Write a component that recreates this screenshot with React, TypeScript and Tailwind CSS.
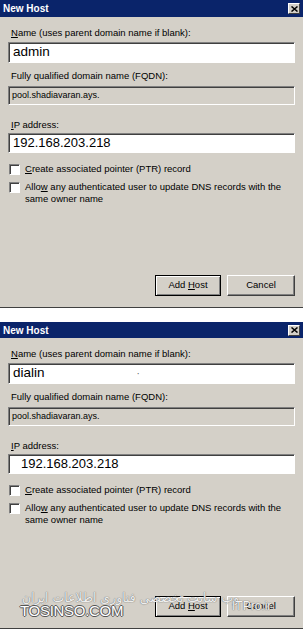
import React from 'react';

const font = { fontFamily: '"Liberation Sans", Arial, sans-serif' };

function Sunken({ children, gray, className }: { children?: React.ReactNode; gray?: boolean; className?: string }) {
  return (
    <div
      className={`flex items-center border border-t-[#808080] border-l-[#808080] border-b-white border-r-white shadow-[inset_1px_1px_0_#404040] ${gray ? 'bg-[#d4d0c8]' : 'bg-white'} ${className ?? ''}`}
    >
      {children}
    </div>
  );
}

function CheckRow({ children, className }: { children: React.ReactNode; className?: string }) {
  return (
    <div className={`flex items-start gap-[5px] pl-[1px] ${className ?? ''}`}>
      <div className="mt-[1px] h-[11px] w-[11px] shrink-0 border border-t-[#808080] border-l-[#808080] border-b-white border-r-white bg-white shadow-[inset_1px_1px_0_#404040]" />
      <div className="text-[9.5px] leading-[12px] text-black">{children}</div>
    </div>
  );
}

function Dialog({
  name,
  extra,
  ipPad,
  titleH,
  watermark,
}: {
  name: string;
  extra?: React.ReactNode;
  ipPad: string;
  titleH: string;
  watermark?: boolean;
}) {
  return (
    <div className="relative bg-[#d4d0c8] border-b border-b-[#404040]" style={font}>
      <div className={`flex ${titleH} items-center justify-between bg-[#0a246a] pl-[3px] pr-[3px]`}>
        <span className="text-[10px] font-bold text-white">New Host</span>
        <div className="flex h-[11px] w-[12px] items-center justify-center border border-t-white border-l-white border-b-[#404040] border-r-[#404040] bg-[#d4d0c8]">
          <svg width="7" height="6" viewBox="0 0 7 6">
            <path d="M0.5 0.5 L6.5 5.5 M6.5 0.5 L0.5 5.5" stroke="#000" strokeWidth="1.5" />
          </svg>
        </div>
      </div>
      <div className="px-[8px] pb-[11px]">
        <div className="ml-[3px] mt-[10px] text-[9.5px] leading-[12px] text-black">
          <span className="underline">N</span>ame (uses parent domain name if blank):
        </div>
        <Sunken className="mt-[3px] h-[21px] pl-[4px]">
          <span className="text-[13.5px] text-black">{name}</span>
          {extra}
        </Sunken>
        <div className="ml-[3px] mt-[7px] text-[9.5px] leading-[12px] text-black">Fully qualified domain name (FQDN):</div>
        <Sunken gray className="mt-[4px] h-[19px] pl-[3px]">
          <span className="text-[9px] text-black">pool.shadiavaran.ays.</span>
        </Sunken>
        <div className="ml-[3px] mt-[14px] text-[9.5px] leading-[12px] text-black">
          <span className="underline">I</span>P address:
        </div>
        <Sunken className={`mt-[2px] h-[20px] ${ipPad}`}>
          <span className="text-[13px] text-black">192.168.203.218</span>
        </Sunken>
        <CheckRow className="mt-[10px]">
          <span className="underline">C</span>reate associated pointer (PTR) record
        </CheckRow>
        <CheckRow className="mt-[6px]">
          Allo<span className="underline">w</span> any authenticated user to update DNS records with the
          <br />
          same owner name
        </CheckRow>
        <div className="mt-[70px] flex justify-end gap-[6px]">
          <button className="flex h-[21px] w-[66px] items-center justify-center border border-black bg-[#d4d0c8] text-[9.5px] text-black shadow-[inset_1px_1px_0_#fff,inset_-1px_-1px_0_#808080]">
            <span>
              Add <span className="underline">H</span>ost
            </span>
          </button>
          <button className="flex h-[21px] w-[68px] items-center justify-center border border-t-white border-l-white border-b-[#404040] border-r-[#404040] bg-[#d4d0c8] text-[9.5px] text-black shadow-[inset_-1px_-1px_0_#808080]">
            Cancel
          </button>
        </div>
      </div>
      {watermark && (
        <>
          <div
            dir="rtl"
            className="absolute left-[22px] top-[267px] text-[12.5px] text-[#eeeeee] [text-shadow:0_0_1px_#777,0_0_1px_#777]"
            style={{ fontFamily: '"DejaVu Sans", sans-serif' }}
          >
            وب سایت تخصصی فناوری اطلاعات ایران
          </div>
          <div className="absolute left-[232px] top-[275px] text-[12px] text-[#f4f4f4] [text-shadow:0_0_1px_#666,0_0_1px_#666]">
            ITPro.ir
          </div>
          <div className="absolute left-[20px] top-[278px] text-[15px] tracking-[-0.3px] text-white [text-shadow:1px_0_0_#555,-1px_0_0_#555,0_1px_0_#555,0_-1px_0_#555]">
            TOSINSO.COM
          </div>
        </>
      )}
    </div>
  );
}

export default function App() {
  return (
    <div className="h-[633px] w-[303px] overflow-hidden bg-white">
      <Dialog name="admin" ipPad="pl-[4px]" titleH="h-[17px]" />
      <div className="h-[14px]" />
      <Dialog
        name="dialin"
        ipPad="pl-[12px]"
        titleH="h-[16px]"
        watermark
        extra={<span className="ml-[92px] text-[10px] text-[#666]">·</span>}
      />
    </div>
  );
}
